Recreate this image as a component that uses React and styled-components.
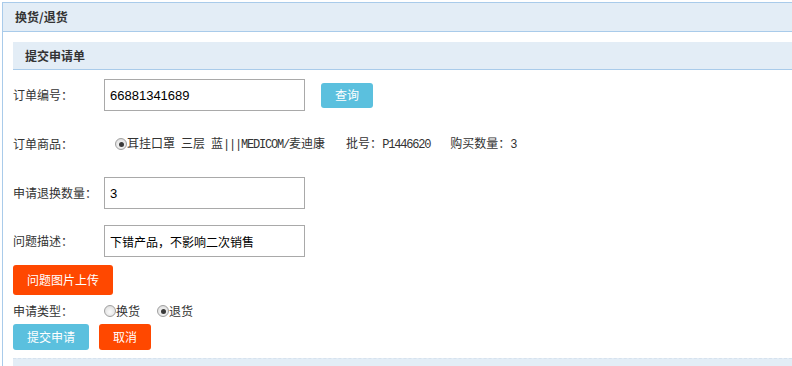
import React from 'react';
import styled, { createGlobalStyle } from 'styled-components';

const GlobalStyle = createGlobalStyle`
  html, body {
    margin: 0;
    padding: 0;
    background: #fff;
    overflow: hidden;
  }
  body {
    font-family: "Noto Sans CJK SC", "Liberation Sans", sans-serif;
    font-size: 12px;
    color: #333;
  }
`;

const Page = styled.div`
  padding: 2px 0 0 2px;
`;

const Panel = styled.div`
  box-sizing: border-box;
  width: 820px;
  height: 364px;
  overflow: hidden;
  border-left: 1px solid #a9cbea;
  border-top: 1px solid #a9cbea;
`;

const PanelHeader = styled.div`
  height: 28px;
  line-height: 28px;
  background: #e3edf6;
  border-bottom: 1px solid #a9cbea;
  padding-left: 12px;
  font-weight: bold;
  color: #333;
`;

const PanelBody = styled.div`
  padding: 10px 0 0 10px;
`;

const SubHeader = styled.div`
  height: 27px;
  line-height: 27px;
  background: #e3edf6;
  border-bottom: 1px solid #a9cbea;
  padding-left: 12px;
  font-weight: bold;
  color: #333;
`;

const Row = styled.div`
  display: flex;
  align-items: center;
  height: ${p => p.$h || 32}px;
  margin-top: ${p => p.$mt || 0}px;
`;

const Label = styled.div`
  width: 91px;
  flex: none;
  color: #333;
  line-height: 16px;
`;

const Input = styled.input`
  box-sizing: border-box;
  width: 201px;
  height: 32px;
  border: 1px solid #a9a9a9;
  padding: 0 5px;
  font-family: ${p => (p.$latin ? '"Liberation Sans", sans-serif' : '"Noto Sans CJK SC", sans-serif')};
  font-size: ${p => (p.$latin ? 13 : 12)}px;
  color: #000;
  outline: none;
`;

const Button = styled.button`
  box-sizing: border-box;
  height: ${p => p.$h || 26}px;
  padding: 0 14px;
  border: none;
  border-radius: 3px;
  background: ${p => (p.$tone === 'red' ? '#ff4800' : '#5bc0de')};
  color: #fff;
  font-family: "Noto Sans CJK SC", sans-serif;
  font-size: 12px;
  line-height: 1;
  margin-left: ${p => p.$ml || 0}px;
  cursor: pointer;
`;

const Goods = styled.div`
  display: flex;
  align-items: center;
  margin-left: 11px;
  line-height: 16px;
  color: #333;
`;

const Item = styled.span`
  margin-left: ${p => p.$ml || 0}px;
  white-space: pre;
`;

const Mono = styled.span`
  font-family: "Liberation Mono", monospace;
  font-size: 12px;
  letter-spacing: -1.2px;
  white-space: pre;
`;

const RadioDot = styled.span`
  box-sizing: border-box;
  display: inline-block;
  width: 12px;
  height: 12px;
  border-radius: 50%;
  border: 1px solid #a0a0a0;
  background: radial-gradient(circle at 50% 60%, #fbfbfb 0%, #e6e6e6 60%, #cfcfcf 100%);
  position: relative;
  flex: none;
  &::after {
    content: '';
    display: ${p => (p.$checked ? 'block' : 'none')};
    position: absolute;
    left: 2.5px;
    top: 2.5px;
    width: 5px;
    height: 5px;
    border-radius: 50%;
    background: #3a3a3a;
  }
`;

const RadioOpt = styled.label`
  display: flex;
  align-items: center;
  margin-left: ${p => p.$ml || 0}px;
  line-height: 16px;
  color: #333;
`;

const BottomHeader = styled.div`
  height: 28px;
  margin-top: 8px;
  background: #e3edf6;
  border-top: 1px dashed #d6e2ee;
`;

export default function App() {
  return (
    <Page>
      <GlobalStyle />
      <Panel>
        <PanelHeader>换货/退货</PanelHeader>
        <PanelBody>
          <SubHeader>提交申请单</SubHeader>

          <Row $mt={9}>
            <Label>订单编号：</Label>
            <Input $latin defaultValue="66881341689" />
            <Button $h={25} $ml={16}>查询</Button>
          </Row>

          <Row $mt={17}>
            <Label>订单商品：</Label>
            <Goods>
              <RadioDot $checked />
              <Item>
                耳挂口罩<Mono> </Mono>三层<Mono> </Mono>蓝<Mono>|||MEDICOM/</Mono>麦迪康
              </Item>
              <Item $ml={21}>
                批号：<Mono>P1446620</Mono>
              </Item>
              <Item $ml={20}>
                购买数量：<Mono>3</Mono>
              </Item>
            </Goods>
          </Row>

          <Row $mt={17}>
            <Label>申请退换数量：</Label>
            <Input $latin defaultValue="3" />
          </Row>

          <Row $mt={16}>
            <Label>问题描述：</Label>
            <Input defaultValue="下错产品，不影响二次销售" />
          </Row>

          <Row $mt={8} $h={30}>
            <Button $tone="red" $h={30}>问题图片上传</Button>
          </Row>

          <Row $mt={8} $h={16}>
            <Label>申请类型：</Label>
            <RadioOpt>
              <RadioDot />
              换货
            </RadioOpt>
            <RadioOpt $ml={17}>
              <RadioDot $checked />
              退货
            </RadioOpt>
          </Row>

          <Row $mt={5} $h={26}>
            <Button>提交申请</Button>
            <Button $tone="red" $ml={10}>取消</Button>
          </Row>

          <BottomHeader />
        </PanelBody>
      </Panel>
    </Page>
  );
}
